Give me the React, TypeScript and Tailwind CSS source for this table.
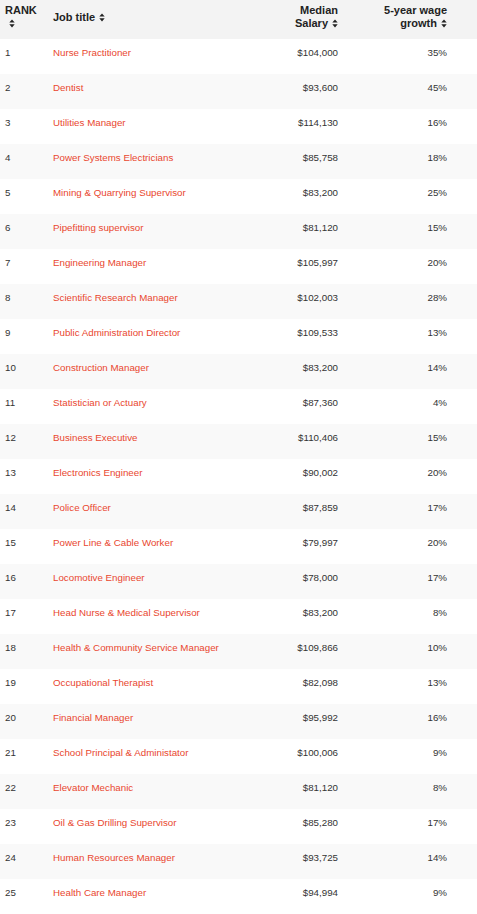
import React from "react";

const rows: [string, string, string][] = [
  ["Nurse Practitioner", "$104,000", "35%"],
  ["Dentist", "$93,600", "45%"],
  ["Utilities Manager", "$114,130", "16%"],
  ["Power Systems Electricians", "$85,758", "18%"],
  ["Mining & Quarrying Supervisor", "$83,200", "25%"],
  ["Pipefitting supervisor", "$81,120", "15%"],
  ["Engineering Manager", "$105,997", "20%"],
  ["Scientific Research Manager", "$102,003", "28%"],
  ["Public Administration Director", "$109,533", "13%"],
  ["Construction Manager", "$83,200", "14%"],
  ["Statistician or Actuary", "$87,360", "4%"],
  ["Business Executive", "$110,406", "15%"],
  ["Electronics Engineer", "$90,002", "20%"],
  ["Police Officer", "$87,859", "17%"],
  ["Power Line & Cable Worker", "$79,997", "20%"],
  ["Locomotive Engineer", "$78,000", "17%"],
  ["Head Nurse & Medical Supervisor", "$83,200", "8%"],
  ["Health & Community Service Manager", "$109,866", "10%"],
  ["Occupational Therapist", "$82,098", "13%"],
  ["Financial Manager", "$95,992", "16%"],
  ["School Principal & Administator", "$100,006", "9%"],
  ["Elevator Mechanic", "$81,120", "8%"],
  ["Oil & Gas Drilling Supervisor", "$85,280", "17%"],
  ["Human Resources Manager", "$93,725", "14%"],
  ["Health Care Manager", "$94,994", "9%"],
];

function SortIcon({ className = "" }: { className?: string }) {
  return (
    <svg
      width="6"
      height="9"
      viewBox="0 0 6 9"
      className={"inline-block align-[-1px] " + className}
      fill="#222"
    >
      <path d="M0.3 3.6 L3 0.5 L5.7 3.6 Z" />
      <path d="M0.3 5.3 L5.7 5.3 L3 8.5 Z" />
    </svg>
  );
}

export default function App() {
  return (
    <div
      className="w-[477px] bg-white"
      style={{ fontFamily: '"Liberation Sans", Arial, sans-serif' }}
    >
      <div className="grid h-[39px] grid-cols-[48px_185px_110px_134px] items-center bg-[#f3f3f3] pb-[5px] text-[11px] font-bold leading-[13px] text-[#222]">
        <div className="pl-[5px]">
          <div>RANK</div>
          <div className="pl-[4px]">
            <SortIcon />
          </div>
        </div>
        <div className="pl-[5px]">
          Job title
          <SortIcon className="ml-[4px]" />
        </div>
        <div className="pr-[5px] text-right">
          <div>Median</div>
          <div>
            Salary
            <SortIcon className="ml-[4px]" />
          </div>
        </div>
        <div className="pr-[30px] text-right">
          <div>5-year wage</div>
          <div>
            growth
            <SortIcon className="ml-[4px]" />
          </div>
        </div>
      </div>
      {rows.map(([title, salary, growth], i) => (
        <div
          key={i}
          className={
            "grid h-[35px] grid-cols-[48px_185px_110px_134px] pt-[6px] text-[9.75px] leading-[16px] text-[#333] " +
            (i % 2 === 1 ? "bg-[#f9f9f9]" : "bg-white")
          }
        >
          <div className="pl-[5px]">{i + 1}</div>
          <div className="whitespace-nowrap pl-[5px] text-[#e9472f]">
            {title}
          </div>
          <div className="pr-[5px] text-right">{salary}</div>
          <div className="pr-[30px] text-right">{growth}</div>
        </div>
      ))}
    </div>
  );
}
